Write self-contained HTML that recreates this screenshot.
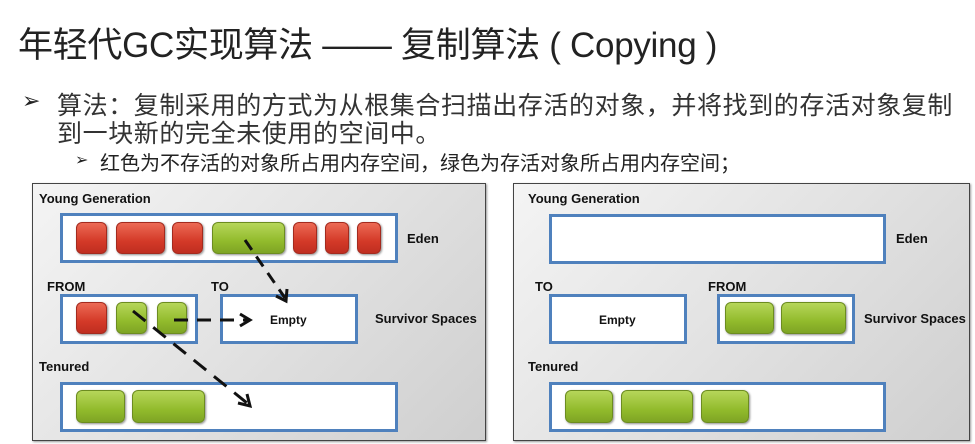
<!DOCTYPE html>
<html><head><meta charset="utf-8"><style>
*{margin:0;padding:0;box-sizing:border-box}
body{width:975px;height:444px;background:#fff;position:relative;overflow:hidden;font-family:"Liberation Sans","Noto Sans CJK SC",sans-serif;color:#222}
.a{position:absolute;white-space:nowrap}
.panel{position:absolute;border:1.5px solid #444;background:linear-gradient(135deg,#f4f4f4 0%,#e2e2e2 50%,#cfcfcf 100%);box-shadow:1px 1px 2px #999}
.box{position:absolute;background:#fff;border:3px solid #4f81bd}
.r,.g{position:absolute;border-radius:6px;box-shadow:1px 1px 2px rgba(0,0,0,.45)}
.r{background:linear-gradient(#ec6a55,#d43a28 60%,#bf2e20);border:1px solid #a32a1e}
.g{background:linear-gradient(#b6d65a,#92bb2c 60%,#7ea424);border:1px solid #6c8c20}
.l{position:absolute;font-weight:bold;font-size:13px;color:#111;white-space:nowrap}
</style></head><body>
<div class="a" style="left:18px;top:17px;font-size:35px;color:#222;letter-spacing:-0.3px">年轻代GC实现算法 —— 复制算法 ( Copying )</div>
<div class="a" style="left:22px;top:88px;font-size:22px">➢</div>
<div class="a" style="left:57px;top:86px;font-size:25px;color:#333;letter-spacing:0.6px">算法：复制采用的方式为从根集合扫描出存活的对象，并将找到的存活对象复制</div>
<div class="a" style="left:57px;top:114px;font-size:25px;color:#333;letter-spacing:0.6px">到一块新的完全未使用的空间中。</div>
<div class="a" style="left:75px;top:150px;font-size:16px">➢</div>
<div class="a" style="left:100px;top:147px;font-size:20px;color:#222">红色为不存活的对象所占用内存空间，绿色为存活对象所占用内存空间；</div>

<div class="panel" style="left:32px;top:183px;width:454px;height:258px"></div>
<div class="l" style="left:39px;top:191px">Young Generation</div>
<div class="box" style="left:60px;top:213px;width:338px;height:50px"></div>
<div class="r" style="left:76px;top:222px;width:31px;height:32px"></div>
<div class="r" style="left:116px;top:222px;width:49px;height:32px"></div>
<div class="r" style="left:172px;top:222px;width:31px;height:32px"></div>
<div class="g" style="left:212px;top:222px;width:73px;height:32px"></div>
<div class="r" style="left:293px;top:222px;width:24px;height:32px"></div>
<div class="r" style="left:325px;top:222px;width:24px;height:32px"></div>
<div class="r" style="left:357px;top:222px;width:24px;height:32px"></div>
<div class="l" style="left:407px;top:231px">Eden</div>
<div class="l" style="left:47px;top:279px">FROM</div>
<div class="l" style="left:211px;top:279px">TO</div>
<div class="box" style="left:60px;top:294px;width:138px;height:50px"></div>
<div class="r" style="left:76px;top:302px;width:31px;height:32px"></div>
<div class="g" style="left:116px;top:302px;width:31px;height:32px"></div>
<div class="g" style="left:157px;top:302px;width:30px;height:32px"></div>
<div class="box" style="left:220px;top:294px;width:138px;height:50px"></div>
<div class="l" style="left:270px;top:313px;font-size:12px">Empty</div>
<div class="l" style="left:375px;top:311px">Survivor Spaces</div>
<div class="l" style="left:39px;top:359px">Tenured</div>
<div class="box" style="left:60px;top:382px;width:338px;height:50px"></div>
<div class="g" style="left:76px;top:390px;width:49px;height:33px"></div>
<div class="g" style="left:132px;top:390px;width:73px;height:33px"></div>
<svg class="a" style="left:0;top:0" width="975" height="444">
<g stroke="#111" stroke-width="3" fill="none">
<line x1="245" y1="240" x2="285" y2="298" stroke-dasharray="12,8"/>
<polyline points="276,296 286,301 287,289"/>
<line x1="174" y1="320" x2="248" y2="320" stroke-dasharray="14,9"/>
<polyline points="240,314 250,320 240,326"/>
<line x1="133" y1="311" x2="247" y2="403" stroke-dasharray="16,10"/>
<polyline points="238,403 250,406 247,394"/>
</g></svg>

<div class="panel" style="left:513px;top:183px;width:457px;height:258px"></div>
<div class="l" style="left:528px;top:191px">Young Generation</div>
<div class="box" style="left:549px;top:214px;width:337px;height:50px"></div>
<div class="l" style="left:896px;top:231px">Eden</div>
<div class="l" style="left:535px;top:279px">TO</div>
<div class="l" style="left:708px;top:279px">FROM</div>
<div class="box" style="left:549px;top:294px;width:138px;height:50px"></div>
<div class="l" style="left:599px;top:313px;font-size:12px">Empty</div>
<div class="box" style="left:717px;top:294px;width:138px;height:50px"></div>
<div class="g" style="left:725px;top:302px;width:49px;height:32px"></div>
<div class="g" style="left:781px;top:302px;width:65px;height:32px"></div>
<div class="l" style="left:864px;top:311px">Survivor Spaces</div>
<div class="l" style="left:528px;top:359px">Tenured</div>
<div class="box" style="left:549px;top:382px;width:337px;height:50px"></div>
<div class="g" style="left:565px;top:390px;width:48px;height:33px"></div>
<div class="g" style="left:621px;top:390px;width:72px;height:33px"></div>
<div class="g" style="left:701px;top:390px;width:48px;height:33px"></div>
</body></html>
